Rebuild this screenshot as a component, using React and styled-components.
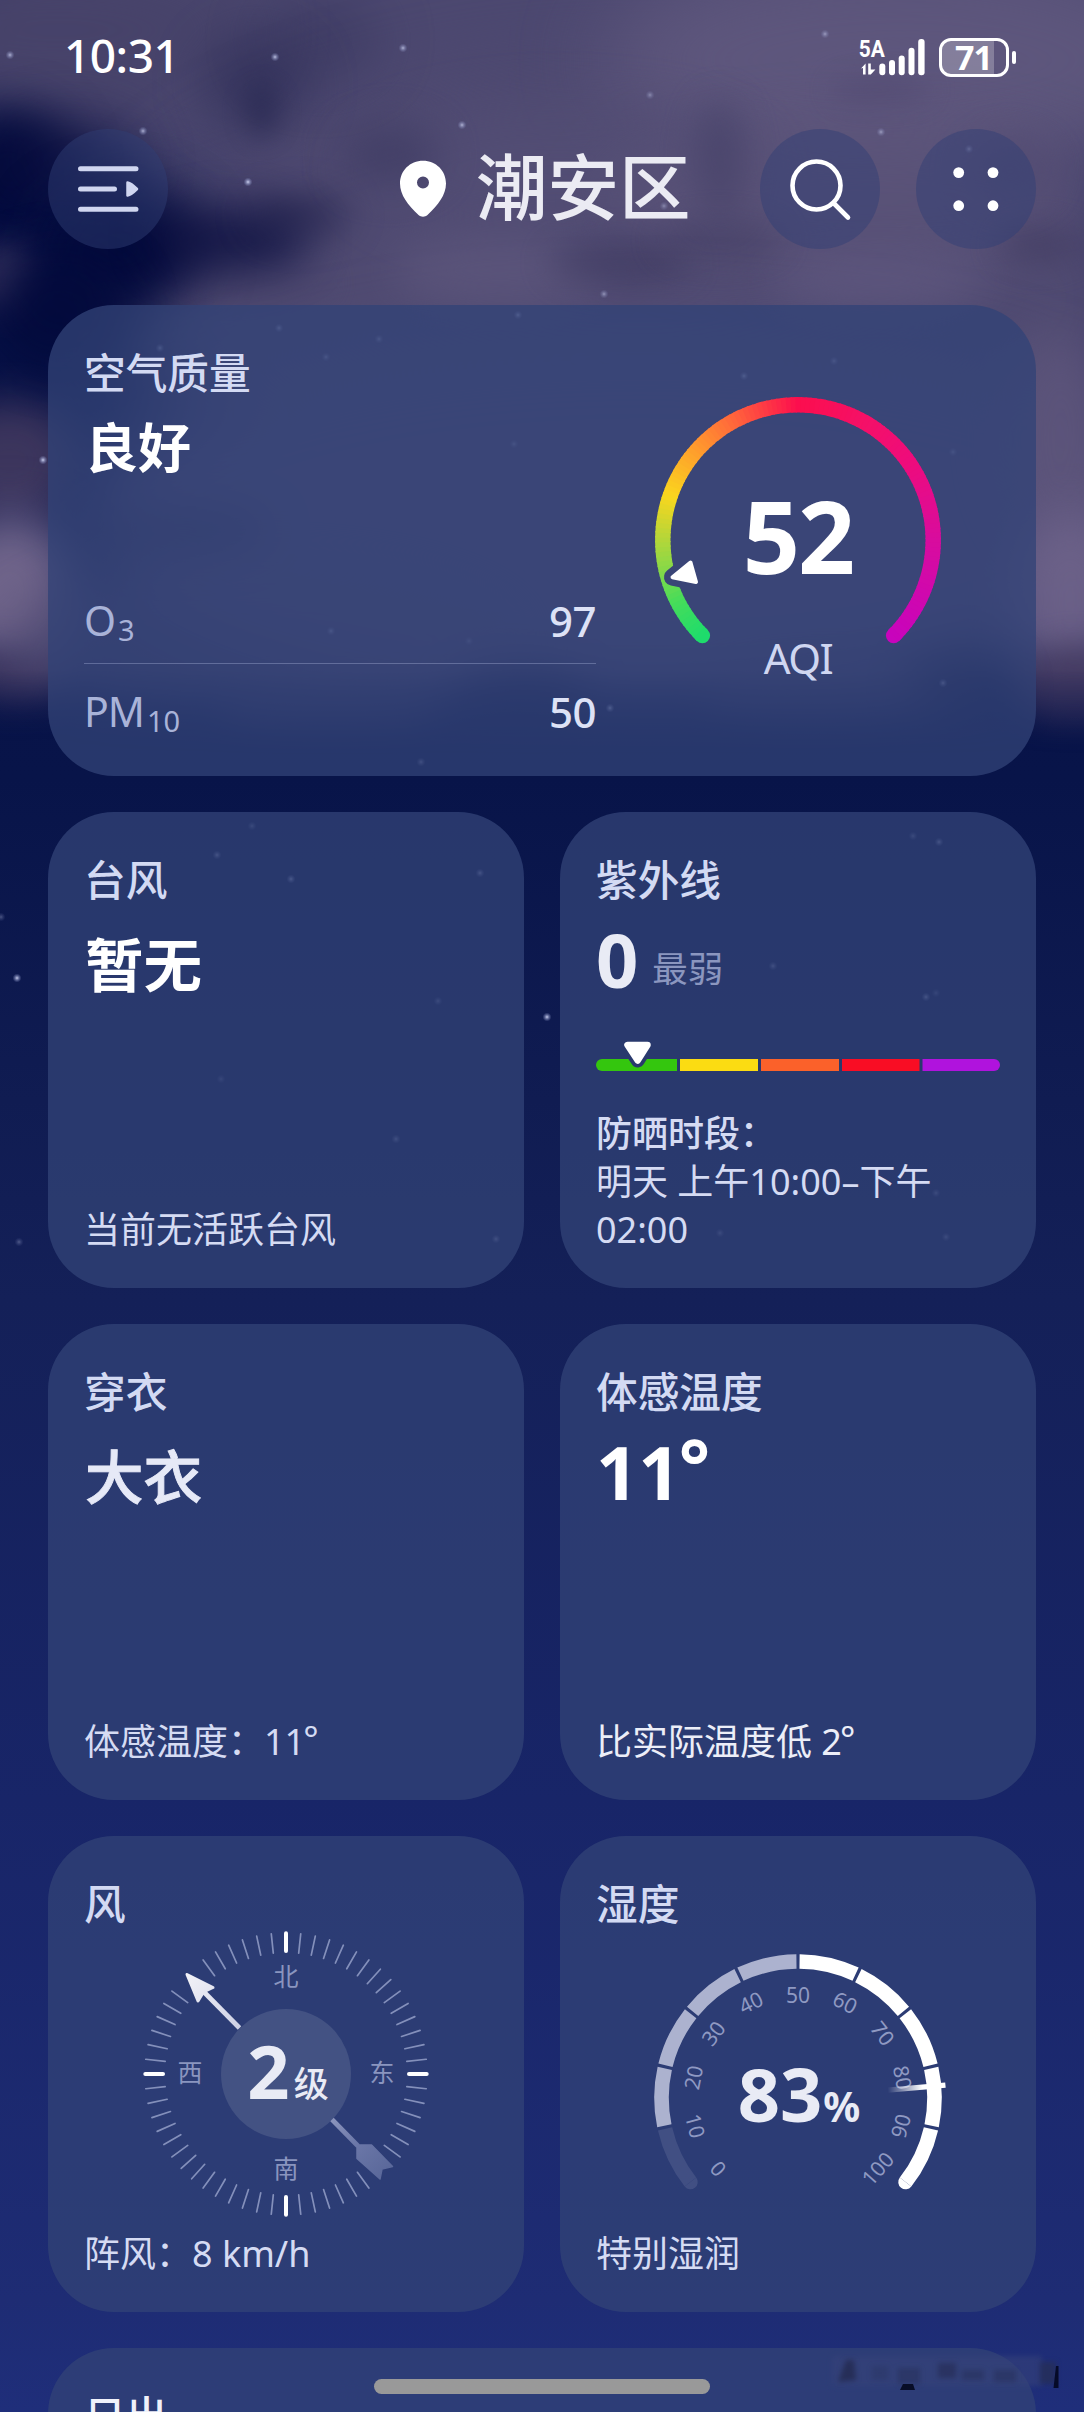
import React from "react";
import styled, { createGlobalStyle } from "styled-components";

const GlobalStyle = createGlobalStyle`
  * { box-sizing: border-box; }
  html, body { margin: 0; padding: 0; background: #1f2d78; }
  body {
    font-family: "Noto Sans", "Noto Sans CJK SC", sans-serif;
    color: #fff;
  }
  svg { display: block; }
`;

/* ---------- page ---------- */

const Page = styled.div`
  position: relative;
  width: 1084px;
  height: 2412px;
  overflow: hidden;
  background: linear-gradient(
    180deg,
    #060f44 0px,
    #081449 780px,
    #101c52 1100px,
    #142058 1300px,
    #182568 1800px,
    #1e2c74 2300px,
    #1f2e7a 2412px
  );
`;

const SkyLayer = styled.svg`
  position: absolute;
  inset: 0;
`;

const Content = styled.div`
  position: relative;
  display: flex;
  flex-direction: column;
`;

/* ---------- status bar ---------- */

const StatusBar = styled.div`
  height: 110px;
  padding: 0 68px 0 64px;
  display: flex;
  justify-content: space-between;
  align-items: center;
`;

const Clock = styled.div`
  font-size: 46px;
  line-height: 64px;
  font-weight: 500;
  letter-spacing: -0.5px;
`;

const StatusIcons = styled.div`
  display: flex;
  align-items: center;
  gap: 14px;
  padding-top: 4px;
`;

const Battery = styled.div`
  display: flex;
  align-items: center;
  gap: 3px;
`;

const BatteryBody = styled.div`
  width: 70px;
  height: 39px;
  border: 3px solid #fff;
  border-radius: 12px;
  display: flex;
  align-items: center;
  justify-content: center;
  background: linear-gradient(90deg, rgba(255, 255, 255, 0.24) 81%, transparent 81%);
  font-size: 34px;
  line-height: 33px;
  font-weight: 700;
  padding-right: 1px;
  letter-spacing: -1px;
`;

const BatteryNub = styled.div`
  width: 4px;
  height: 13px;
  border-radius: 2px;
  background: #fff;
`;

/* ---------- header ---------- */

const Header = styled.header`
  height: 120px;
  margin: 19px 48px 0;
  display: flex;
  align-items: center;
`;

const RoundButton = styled.div`
  width: 120px;
  height: 120px;
  border-radius: 50%;
  background: rgba(48, 62, 118, 0.48);
  display: flex;
  align-items: center;
  justify-content: center;
  flex: none;
`;

const Place = styled.div`
  flex: 1;
  display: flex;
  align-items: center;
  padding-left: 231px;
`;

const PlaceName = styled.h1`
  margin: 0 0 4px 29px;
  font-size: 71.5px;
  line-height: 90px;
  font-weight: 500;
  color: #ebebf3;
`;

const HeaderActions = styled.div`
  display: flex;
  gap: 36px;
`;

/* ---------- cards ---------- */

const Board = styled.main`
  margin: 56px 48px 0;
  display: grid;
  grid-template-columns: 476px 476px;
  gap: 36px;
`;

const Card = styled.section`
  height: ${(p) => (p.$wide ? 471 : 476)}px;
  grid-column: ${(p) => (p.$wide ? "1 / -1" : "auto")};
  border-radius: 66px;
  padding: 40px 36px 34px;
  background: rgba(50, 67, 119, 0.77);
  display: flex;
  flex-direction: ${(p) => (p.$row ? "row" : "column")};
`;

const Title = styled.h2`
  margin: 0;
  font-size: 41.7px;
  line-height: 56px;
  font-weight: 500;
  color: ${(p) => p.$color || "#d3daf3"};
`;

const Headline = styled.div`
  margin-top: ${(p) => p.$top}px;
  margin-left: 1px;
  font-size: ${(p) => p.$size}px;
  line-height: 64px;
  font-weight: ${(p) => p.$weight || 700};
  color: ${(p) => p.$color || "#fff"};
  -webkit-text-stroke: ${(p) => p.$stroke || 0}px currentColor;
`;

const Footnote = styled.div`
  margin-top: auto;
  font-size: 36px;
  line-height: 48px;
  white-space: nowrap;
  color: ${(p) => p.$color || "#d5dbf3"};
`;

const NoteLine = styled.div`
  font-weight: ${(p) => (p.$strong ? 500 : 400)};
`;

const Degree = styled.span`
  position: relative;
  top: ${(p) => p.$raise}px;
  margin-left: -2px;
`;

/* air quality */

const AirInfo = styled.div`
  width: 512px;
  display: flex;
  flex-direction: column;
`;

const Pollutants = styled.div`
  margin-top: 99px;
`;

const Pollutant = styled.div`
  height: ${(p) => p.$height}px;
  display: flex;
  align-items: center;
  justify-content: space-between;
  border-bottom: ${(p) => (p.$ruled ? "1.5px solid rgba(200, 210, 245, 0.3)" : "none")};
`;

const PollutantName = styled.div`
  margin-top: 2px;
  font-size: 41px;
  line-height: 60px;
  color: #a9b3d8;
  letter-spacing: -1px;
`;

const Sub = styled.span`
  font-size: 29px;
  position: relative;
  top: 5px;
  margin-left: 3px;
  letter-spacing: 0;
`;

const PollutantValue = styled.div`
  font-size: 42px;
  line-height: 60px;
  font-weight: 500;
  letter-spacing: -0.5px;
  color: #dde2f6;
`;

const Dial = styled.div`
  display: grid;
  place-items: start center;
  align-self: ${(p) => (p.$side ? "flex-start" : "center")};
  margin: ${(p) => p.$margin};
  & > * { grid-area: 1 / 1; }
`;

const AqiReadout = styled.div`
  display: flex;
  flex-direction: column;
  align-items: center;
  padding-top: 95px;
`;

const AqiNumber = styled.div`
  font-size: 100px;
  line-height: 100px;
  font-weight: 700;
  letter-spacing: -2px;
`;

const AqiLabel = styled.div`
  margin-top: 48px;
  font-size: 42px;
  line-height: 50px;
  color: #cfd6f1;
  letter-spacing: -1.5px;
`;

/* ultraviolet */

const UvReading = styled.div`
  display: flex;
  align-items: baseline;
  margin-top: 12px;
  height: 80px;
`;

const BigNumber = styled.span`
  font-size: 74px;
  line-height: 80px;
  font-weight: 700;
  color: ${(p) => p.$color || "#fff"};
`;

const UvLevel = styled.span`
  position: relative;
  top: -6px;
  margin-left: 14px;
  font-size: 35.5px;
  line-height: 48px;
  color: #8b96bf;
`;

/* wind and humidity readouts */

const DialReadout = styled.div`
  display: flex;
  align-items: baseline;
  line-height: 80px;
  padding-top: ${(p) => p.$top}px;
  padding-left: ${(p) => p.$left || 0}px;
  color: #e9ebf5;
`;

const Unit = styled.span`
  font-size: ${(p) => p.$size}px;
  font-weight: ${(p) => p.$weight};
  margin-left: ${(p) => p.$gap}px;
  position: relative;
  top: ${(p) => p.$drop || 0}px;
`;

/* system overlays */

const HomeIndicator = styled.div`
  position: absolute;
  left: 374px;
  bottom: 18px;
  width: 336px;
  height: 15px;
  border-radius: 8px;
  background: #999;
`;

const Smudge = styled.svg`
  position: absolute;
  left: 820px;
  bottom: 16px;
`;

/* ---------- sky ---------- */

const STARS = [
  [10, 55, 0.7], [275, 57, 0.8], [403, 48, 0.7], [462, 125, 0.7], [143, 131, 0.7],
  [248, 182, 0.9], [825, 34, 0.5], [650, 95, 0.4], [881, 132, 0.5], [604, 294, 0.5],
  [664, 206, 0.4], [969, 149, 0.4], [17, 978, 0.9], [547, 1017, 0.9], [19, 1242, 0.3],
  [43, 460, 0.9], [1, 917, 0.3],
  [610, 708, 0.8], [744, 376, 0.7], [834, 361, 0.5], [953, 452, 0.4], [943, 683, 0.6],
  [279, 328, 0.6], [518, 315, 0.7], [379, 339, 0.5], [160, 348, 0.6], [326, 357, 0.5],
  [331, 631, 0.5], [469, 641, 0.3], [421, 762, 0.5], [514, 444, 0.4],
  [913, 836, 0.4], [939, 842, 0.6], [773, 966, 0.5], [926, 997, 0.6], [936, 993, 0.3],
  [936, 1193, 0.4], [720, 1233, 0.4], [946, 1237, 0.4], [252, 826, 0.4], [217, 855, 0.6],
  [291, 879, 0.7], [480, 873, 0.6], [438, 1001, 0.4], [221, 1079, 0.3], [396, 1139, 0.5],
  [496, 1239, 0.5],
];

/* cx, cy, rx, ry, colour, opacity, blur */
const CLOUDS = [
  [620, 40, 700, 200, "#4c4870", 1, 40],
  [60, 30, 200, 70, "#464269", 0.9, 36],
  [640, 300, 520, 240, "#4f4a71", 1, 40],
  [900, 60, 300, 120, "#625a80", 0.8, 46],
  [560, 170, 200, 60, "#534e75", 0.8, 30],
  [860, 200, 260, 70, "#5c5479", 0.7, 34],
  [640, 520, 560, 190, "#56507a", 1, 40],
  [500, 270, 110, 36, "#5f587e", 0.7, 22],
  [880, 280, 110, 30, "#615981", 0.7, 22],
  [1060, 440, 60, 110, "#5d557b", 0.9, 26],
  [1070, 600, 60, 90, "#6e638a", 0.9, 24],
  [1075, 690, 60, 45, "#453b62", 0.9, 16],
  [10, 460, 70, 60, "#433a60", 0.9, 22],
  [10, 590, 70, 80, "#6f648a", 1, 24],
  [15, 680, 50, 30, "#40375f", 0.8, 16],
  [260, 640, 260, 80, "#544e76", 0.7, 24],
  [330, 715, 110, 28, "#504a72", 0.7, 16],
  [830, 700, 130, 34, "#504a72", 0.7, 18],
  [8, 275, 34, 36, "#443d66", 0.8, 16],
  [270, 282, 60, 16, "#4b466d", 0.7, 14],
];

const SHADOWS = [
  [320, 40, 60, 40, "#2a2a52", 0.4, 30],
  [255, 85, 50, 46, "#24254f", 0.55, 26],
  [262, 112, 16, 26, "#1d1f49", 0.4, 12],
  [10, 170, 60, 60, "#030a3c", 1, 24],
  [70, 160, 70, 40, "#0d1142", 0.7, 28],
  [120, 250, 80, 60, "#030a3c", 1, 26],
  [230, 240, 80, 34, "#0b0f40", 0.8, 22],
  [300, 215, 50, 20, "#1b1c48", 0.6, 18],
  [60, 310, 70, 60, "#030a3c", 0.9, 24],
  [390, 155, 50, 30, "#36345c", 0.5, 20],
  [720, 160, 22, 60, "#3d3a61", 0.5, 18],
  [620, 262, 70, 20, "#3c385f", 0.6, 16],
  [720, 240, 60, 16, "#3e3a60", 0.5, 16],
  [1040, 245, 40, 16, "#3f3a60", 0.7, 16],
  [1010, 170, 40, 30, "#4d466e", 0.5, 20],
  [880, 90, 50, 12, "#4e466f", 0.6, 14],
  [180, 530, 90, 24, "#23264f", 0.5, 22],
  [520, 700, 70, 30, "#0b123f", 0.6, 22],
  [960, 690, 50, 40, "#10163f", 0.5, 22],
];

const Blob = ({ shape: [cx, cy, rx, ry, fill, opacity, blur] }) => (
  <ellipse cx={cx} cy={cy} rx={rx} ry={ry} fill={fill} opacity={opacity} filter={`url(#blur${blur})`} />
);

const BLURS = [...new Set([...CLOUDS, ...SHADOWS].map((s) => s[6]))];

const Sky = () => (
  <SkyLayer width="1084" height="2412" viewBox="0 0 1084 2412">
    <defs>
      {BLURS.map((b) => (
        <filter
          key={b}
          id={`blur${b}`}
          filterUnits="userSpaceOnUse"
          x="-200"
          y="-200"
          width="1500"
          height="1100"
          colorInterpolationFilters="sRGB"
        >
          <feGaussianBlur stdDeviation={b} />
        </filter>
      ))}
      <radialGradient id="star">
        <stop offset="0" stopColor="#dfe4ff" />
        <stop offset="0.4" stopColor="#b4bce6" stopOpacity="0.6" />
        <stop offset="1" stopColor="#8a94c8" stopOpacity="0" />
      </radialGradient>
      <linearGradient id="cloudFade" x1="0" y1="0" x2="0" y2="1">
        <stop offset="0.87" stopColor="#fff" />
        <stop offset="0.98" stopColor="#000" />
      </linearGradient>
      <mask id="cloudMask">
        <rect width="1084" height="770" fill="url(#cloudFade)" />
      </mask>
    </defs>
    <g mask="url(#cloudMask)">
      {CLOUDS.map((shape, i) => <Blob key={i} shape={shape} />)}
      {SHADOWS.map((shape, i) => <Blob key={i} shape={shape} />)}
    </g>
    {STARS.map(([x, y, o], i) => (
      <circle key={i} cx={x} cy={y} r="4.5" fill="url(#star)" opacity={o} />
    ))}
  </SkyLayer>
);

/* ---------- geometry helpers ---------- */

const polar = (cx, cy, r, deg) => {
  const a = ((deg - 90) * Math.PI) / 180;
  return [cx + r * Math.cos(a), cy + r * Math.sin(a)];
};

const arc = (cx, cy, r, from, to) => {
  const [x1, y1] = polar(cx, cy, r, from);
  const [x2, y2] = polar(cx, cy, r, to);
  return `M${x1.toFixed(2)} ${y1.toFixed(2)}A${r} ${r} 0 ${to - from > 180 ? 1 : 0} 1 ${x2.toFixed(2)} ${y2.toFixed(2)}`;
};

/* ---------- icons ---------- */

const SignalIcon = () => (
  <svg width="68" height="60" viewBox="857 26 68 60" fill="#fff">
    <text x="858.7" y="55.5" fontFamily="Roboto" fontWeight="700" fontSize="24.5" textLength="26" lengthAdjust="spacingAndGlyphs">5A</text>
    <path d="M861 67.5 L865.6 62.5 V73.6 H863 V67 Z" />
    <path d="M868.2 62.5 H870.8 V68.6 H875.4 L870.8 73.6 H868.2 Z" />
    <rect x="879.3" y="62.5" width="6" height="11.7" rx="3" />
    <rect x="889" y="59" width="6" height="15.2" rx="3" />
    <rect x="898.7" y="54.5" width="6" height="19.7" rx="3" />
    <rect x="908.5" y="46.7" width="6" height="27.5" rx="3" />
    <rect x="918.2" y="38" width="6.4" height="36.2" rx="3" />
  </svg>
);

const MenuIcon = () => (
  <svg width="64" height="50" viewBox="76 164 64 50" stroke="#d0d6f0" strokeWidth="5" strokeLinecap="round">
    <path d="M80.5 168.8H136M80.5 189H114.5M80.5 209.2H136" />
    <path d="M127.5 182.5C130 183 135 187 137 189C135 191 130 195 127.5 195.5Z" fill="#d0d6f0" strokeWidth="2.5" strokeLinejoin="round" />
  </svg>
);

const PinIcon = () => (
  <svg width="48" height="58" viewBox="399 161 48 58">
    <path
      fillRule="evenodd"
      fill="#fff"
      d="M423 161.7C410 161.7 400 171.7 400 184.5C400 196 408 206 418.5 216C421 218.3 425 218.3 427.5 216C438 206 446 196 446 184.5C446 171.7 436 161.7 423 161.7ZM423 177.5A6 6 0 1 1 423 189.5A6 6 0 1 1 423 177.5Z"
    />
  </svg>
);

const SearchIcon = () => (
  <svg width="64" height="64" viewBox="788 157 64 64" fill="none" stroke="#fff" strokeWidth="4.6" strokeLinecap="round">
    <circle cx="816.5" cy="185.5" r="24" />
    <path d="M834 203.5L848 217.5" />
  </svg>
);

const MoreIcon = () => (
  <svg width="48" height="48" viewBox="952 164 48 48" fill="#fff">
    {[958.7, 993].map((x) =>
      [171.6, 204.7].map((y) => <circle key={`${x}-${y}`} cx={x} cy={y} r="5.4" />)
    )}
  </svg>
);

/* ---------- AQI gauge ---------- */

const AQI_STOPS = [
  [0, [30, 220, 108]],
  [18, [70, 220, 90]],
  [34, [140, 216, 70]],
  [46, [182, 214, 56]],
  [64, [250, 214, 30]],
  [88, [255, 152, 46]],
  [108, [255, 98, 60]],
  [135, [252, 14, 78]],
  [165, [244, 16, 104]],
  [190, [238, 12, 124]],
  [225, [216, 12, 158]],
  [270, [200, 4, 188]],
];

const aqiColor = (a) => {
  let i = 0;
  while (i < AQI_STOPS.length - 2 && a > AQI_STOPS[i + 1][0]) i++;
  const [a0, c0] = AQI_STOPS[i];
  const [a1, c1] = AQI_STOPS[i + 1];
  const t = (a - a0) / (a1 - a0);
  return `rgb(${c0.map((v, k) => Math.round(v + (c1[k] - v) * t)).join(",")})`;
};

const AQI_MARKER = "M24.5 187.2L42.5 172.5L48 192Z";

const AqiGauge = () => (
  <svg width="300" height="300" viewBox="0 0 300 300">
    <defs>
      <mask id="aqiNotch" maskUnits="userSpaceOnUse" x="0" y="0" width="300" height="300">
        <rect width="300" height="300" fill="#fff" />
        <path d={AQI_MARKER} fill="#000" stroke="#000" strokeWidth="17" strokeLinejoin="round" />
      </mask>
    </defs>
    <g mask="url(#aqiNotch)" fill="none" strokeWidth="15.4">
      <path d={arc(150, 150, 135.2, -135, -134)} stroke={aqiColor(0)} strokeLinecap="round" />
      <path d={arc(150, 150, 135.2, 134, 135)} stroke={aqiColor(270)} strokeLinecap="round" />
      {Array.from({ length: 135 }, (_, i) => (
        <path
          key={i}
          d={arc(150, 150, 135.2, -135 + i * 2, Math.min(135, -135 + i * 2 + 2.6))}
          stroke={aqiColor(i * 2 + 1)}
        />
      ))}
    </g>
    <path d={AQI_MARKER} fill="#fff" stroke="#fff" strokeWidth="4" strokeLinejoin="round" />
  </svg>
);

/* ---------- UV scale ---------- */

const UV_SEGMENTS = [
  [0, 81, "#34c60e"],
  [84, 78, "#fbdc12"],
  [165, 78, "#fb612a"],
  [246, 77.5, "#f90d24"],
  [326.5, 77.5, "#b013dd"],
];

const UV_MARKER = "M31.5 4H51.5L41.7 19.5Z";

const UvScaleSvg = styled.svg`
  margin-top: 1px;
`;

const UvScale = () => (
  <UvScaleSvg width="404" height="32" viewBox="0 0 404 32">
    <defs>
      <clipPath id="uvBar">
        <rect y="18" width="404" height="12" rx="6" />
      </clipPath>
      <mask id="uvNotch" maskUnits="userSpaceOnUse" x="0" y="0" width="404" height="32">
        <rect width="404" height="32" fill="#fff" />
        <path d={UV_MARKER} fill="#000" stroke="#000" strokeWidth="14" strokeLinejoin="round" />
      </mask>
    </defs>
    <g clipPath="url(#uvBar)">
      <g mask="url(#uvNotch)">
        {UV_SEGMENTS.map(([x, w, fill]) => (
          <rect key={x} x={x} y="18" width={w} height="12" fill={fill} />
        ))}
      </g>
    </g>
    <path d={UV_MARKER} fill="#fff" stroke="#fff" strokeWidth="6.5" strokeLinejoin="round" />
  </UvScaleSvg>
);

/* ---------- wind compass ---------- */

const HIDDEN_TICKS = [132, 138, 312, 318];
const COMPASS_LABELS = [
  ["北", 150, 52],
  ["东", 246, 148.5],
  ["南", 150, 244],
  ["西", 54, 148.5],
];

const Compass = () => (
  <svg width="300" height="300" viewBox="0 0 300 300">
    <defs>
      <linearGradient id="windHead" gradientUnits="userSpaceOnUse" x1="50" y1="50" x2="106" y2="106">
        <stop offset="0" stopColor="#f2f2f8" />
        <stop offset="1" stopColor="#cdd0e4" />
      </linearGradient>
      <linearGradient id="windTail" gradientUnits="userSpaceOnUse" x1="194" y1="194" x2="252" y2="252">
        <stop offset="0" stopColor="#8d96bd" />
        <stop offset="0.45" stopColor="#6b77a8" />
        <stop offset="1" stopColor="#596799" />
      </linearGradient>
    </defs>
    {Array.from({ length: 60 }, (_, i) => i * 6)
      .filter((a) => !HIDDEN_TICKS.includes(a))
      .map((a) => {
        const main = a % 90 === 0;
        const [x1, y1] = polar(150, 150, main ? 140.7 : 141, a);
        const [x2, y2] = polar(150, 150, main ? 123 : 121.5, a);
        return (
          <line
            key={a}
            x1={x1}
            y1={y1}
            x2={x2}
            y2={y2}
            stroke={main ? "#fff" : "#8490bb"}
            strokeWidth={main ? 4 : 1.7}
            strokeLinecap="round"
          />
        );
      })}
    {COMPASS_LABELS.map(([label, x, y]) => (
      <text key={label} x={x} y={y + 9.5} textAnchor="middle" fontSize="25" fill="#8a95bf">
        {label}
      </text>
    ))}
    <circle cx="150" cy="150" r="65" fill="#435283" />
    <path d="M66 66L103.5 104" stroke="url(#windHead)" strokeWidth="4.8" />
    <path d="M51 50.5L77 63.5L67.5 68L62 77Z" fill="url(#windHead)" stroke="url(#windHead)" strokeWidth="3" strokeLinejoin="round" />
    <path d="M196 195.5L222 222" stroke="url(#windTail)" strokeWidth="4.8" />
    <path d="M221 221H235.5L256.5 242.5L246 245L244 255L221 234.5Z" fill="url(#windTail)" stroke="url(#windTail)" strokeWidth="1.5" strokeLinejoin="round" />
  </svg>
);

/* ---------- humidity gauge ---------- */

const HUMIDITY_STEP = 25.6;
const HUMIDITY_LABEL_STEP = 26.3;

const humidityColor = (i) => (i === 0 ? "#414f83" : i < 5 ? "#acb2cf" : "#fff");

const HumidityGauge = () => {
  const [nx, ny] = polar(150, 150, 148, 85);
  const [mx, my] = polar(150, 150, 90, 85);
  return (
    <svg width="300" height="256" viewBox="0 0 300 256">
      <defs>
        <linearGradient id="needle" gradientUnits="userSpaceOnUse" x1={mx} y1={my} x2={nx} y2={ny}>
          <stop offset="0" stopColor="#fff" stopOpacity="0" />
          <stop offset="0.6" stopColor="#fff" />
        </linearGradient>
      </defs>
      {Array.from({ length: 10 }, (_, i) => {
        const from = -128 + i * HUMIDITY_STEP + (i === 0 ? 0 : 0.65);
        const to = -128 + (i + 1) * HUMIDITY_STEP - (i === 9 ? 0 : 0.65);
        return (
          <path key={i} d={arc(150, 150, 136.5, from, to)} fill="none" stroke={humidityColor(i)} strokeWidth="14.6" />
        );
      })}
      {[[-128, 0, 0], [128, 9, 1]].map(([a, i, sweep]) => {
        const [x1, y1] = polar(150, 150, 143.8, a);
        const [x2, y2] = polar(150, 150, 129.2, a);
        return <path key={a} d={`M${x1} ${y1}A7.3 7.3 0 0 ${sweep} ${x2} ${y2}Z`} fill={humidityColor(i)} />;
      })}
      {Array.from({ length: 11 }, (_, i) => {
        const a = (i - 5) * HUMIDITY_LABEL_STEP;
        const turn = Math.abs(a) > 90 ? a + (a < 0 ? 180 : -180) : a;
        const [x, y] = polar(150, 150, i === 5 ? 102.5 : 106.5, a);
        return (
          <text
            key={i}
            transform={`translate(${x} ${y}) rotate(${turn})`}
            y="7.7"
            textAnchor="middle"
            fontSize="21"
            fill="#8f99c2"
          >
            {i * 10}
          </text>
        );
      })}
      <line x1={mx} y1={my} x2={nx} y2={ny} stroke="url(#needle)" strokeWidth="5.4" />
    </svg>
  );
};

/* ---------- app ---------- */

export default function App() {
  return (
    <>
      <GlobalStyle />
      <Page>
        <Sky />
        <Content>
          <StatusBar>
            <Clock>10:31</Clock>
            <StatusIcons>
              <SignalIcon />
              <Battery>
                <BatteryBody>71</BatteryBody>
                <BatteryNub />
              </Battery>
            </StatusIcons>
          </StatusBar>

          <Header>
            <RoundButton><MenuIcon /></RoundButton>
            <Place>
              <PinIcon />
              <PlaceName>潮安区</PlaceName>
            </Place>
            <HeaderActions>
              <RoundButton><SearchIcon /></RoundButton>
              <RoundButton><MoreIcon /></RoundButton>
            </HeaderActions>
          </Header>

          <Board>
            <Card $wide $row>
              <AirInfo>
                <Title>空气质量</Title>
                <Headline $top={15} $size={53}>良好</Headline>
                <Pollutants>
                  <Pollutant $height={85} $ruled>
                    <PollutantName>O<Sub>3</Sub></PollutantName>
                    <PollutantValue>97</PollutantValue>
                  </Pollutant>
                  <Pollutant $height={96}>
                    <PollutantName>PM<Sub>10</Sub></PollutantName>
                    <PollutantValue>50</PollutantValue>
                  </Pollutant>
                </Pollutants>
              </AirInfo>
              <Dial $side $margin="45px 0 0 52px">
                <AqiGauge />
                <AqiReadout>
                  <AqiNumber>52</AqiNumber>
                  <AqiLabel>AQI</AqiLabel>
                </AqiReadout>
              </Dial>
            </Card>

            <Card>
              <Title>台风</Title>
              <Headline $top={24} $size={58.5}>暂无</Headline>
              <Footnote>当前无活跃台风</Footnote>
            </Card>

            <Card>
              <Title>紫外线</Title>
              <UvReading>
                <BigNumber $color="#e9ebf5">0</BigNumber>
                <UvLevel>最弱</UvLevel>
              </UvReading>
              <Dial $side $margin="40px 0 0">
                <UvScale />
              </Dial>
              <Footnote>
                <NoteLine $strong>防晒时段：</NoteLine>
                <NoteLine>明天 上午10:00–下午</NoteLine>
                <NoteLine>02:00</NoteLine>
              </Footnote>
            </Card>

            <Card>
              <Title>穿衣</Title>
              <Headline $top={24} $size={58.5} $weight={500} $stroke={0.9} $color="#e6e9f7">大衣</Headline>
              <Footnote>体感温度：11<Degree $raise={-3}>°</Degree></Footnote>
            </Card>

            <Card>
              <Title>体感温度</Title>
              <UvReading>
                <BigNumber>11<Degree $raise={-8}>°</Degree></BigNumber>
              </UvReading>
              <Footnote $color="#eceef8">比实际温度低 2<Degree $raise={-3}>°</Degree></Footnote>
            </Card>

            <Card>
              <Title>风</Title>
              <Dial $margin="-8px 0 0">
                <Compass />
                <DialReadout $top={107} $left={4}>
                  <BigNumber $color="#e9ebf5">2</BigNumber>
                  <Unit $size={35} $weight={500} $gap={4} $drop={-2}>级</Unit>
                </DialReadout>
              </Dial>
              <Footnote>阵风：8 km/h</Footnote>
            </Card>

            <Card>
              <Title>湿度</Title>
              <Dial $margin="16px 0 0">
                <HumidityGauge />
                <DialReadout $top={106} $left={2}>
                  <BigNumber $color="#e9ebf5">83</BigNumber>
                  <Unit $size={41} $weight={700} $gap={1}>%</Unit>
                </DialReadout>
              </Dial>
              <Footnote>特别湿润</Footnote>
            </Card>

            <Card $wide>
              <Title $color="#f0f1fa">日出</Title>
            </Card>
          </Board>
        </Content>

        <Smudge width="250" height="50" viewBox="820 2346 250 50">
          <defs>
            <filter id="smudgeBlur" x="-50%" y="-50%" width="200%" height="200%" colorInterpolationFilters="sRGB">
              <feGaussianBlur stdDeviation="2.6" />
            </filter>
          </defs>
          <rect x="832" y="2356" width="210" height="30" fill="#36427a" opacity="0.6" filter="url(#smudgeBlur)" />
          <g fill="#262e58" filter="url(#smudgeBlur)">
            <path d="M838 2382L846 2360H854L856 2380Z" />
            <rect x="872" y="2366" width="16" height="14" opacity="0.3" />
            <rect x="898" y="2368" width="22" height="16" opacity="0.5" />
            <rect x="938" y="2363" width="18" height="15" opacity="0.7" />
            <rect x="962" y="2370" width="22" height="10" opacity="0.5" />
            <rect x="994" y="2370" width="22" height="12" opacity="0.5" />
            <rect x="1040" y="2362" width="16" height="22" opacity="0.8" />
          </g>
          <path d="M900 2390L903 2384H913L915 2390Z" fill="#080d26" />
          <path d="M1053.5 2388L1056 2366H1058.5V2388Z" fill="#060b28" />
        </Smudge>
        <HomeIndicator />
      </Page>
    </>
  );
}
